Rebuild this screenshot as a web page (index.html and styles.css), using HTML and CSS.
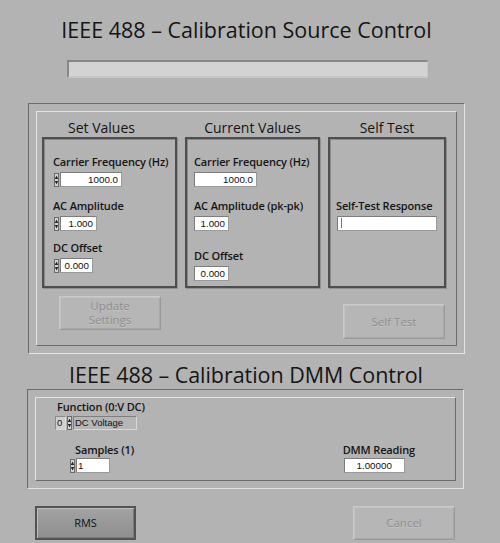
FILE: index.html
```html
<!DOCTYPE html>
<html>
<head>
<meta charset="utf-8">
<title>IEEE 488 Calibration</title>
<link rel="stylesheet" href="styles.css">
</head>
<body>
<div class="page">
  <h1 class="title">IEEE 488 – Calibration Source Control</h1>
  <div class="progress"></div>

  <div class="frame frame-source">
    <div class="frame-inner inner-source">
      <div class="cols">
        <div class="col-head head-set">Set Values</div>
        <div class="col-head">Current Values</div>
        <div class="col-head">Self Test</div>

        <div class="panel panel-set">
          <div class="field">
            <div class="label">Carrier Frequency (Hz)</div>
            <div class="ctl">
              <svg class="spin" width="5" height="14" viewBox="0 0 5 14"><rect x="0.5" y="0.5" width="4" height="13" fill="#d6d6d6" stroke="#6a6a6a"/><path d="M0.8 6 L2.5 2.6 L4.2 6Z M0.8 8 L2.5 11.4 L4.2 8Z" fill="#222"/></svg>
              <div class="num w62">1000.0</div>
            </div>
          </div>
          <div class="field f2">
            <div class="label">AC Amplitude</div>
            <div class="ctl">
              <svg class="spin" width="5" height="14" viewBox="0 0 5 14"><rect x="0.5" y="0.5" width="4" height="13" fill="#d6d6d6" stroke="#6a6a6a"/><path d="M0.8 6 L2.5 2.6 L4.2 6Z M0.8 8 L2.5 11.4 L4.2 8Z" fill="#222"/></svg>
              <div class="num w37">1.000</div>
            </div>
          </div>
          <div class="field f3">
            <div class="label">DC Offset</div>
            <div class="ctl">
              <svg class="spin" width="5" height="14" viewBox="0 0 5 14"><rect x="0.5" y="0.5" width="4" height="13" fill="#d6d6d6" stroke="#6a6a6a"/><path d="M0.8 6 L2.5 2.6 L4.2 6Z M0.8 8 L2.5 11.4 L4.2 8Z" fill="#222"/></svg>
              <div class="num w33">0.000</div>
            </div>
          </div>
        </div>

        <div class="panel panel-cur">
          <div class="field">
            <div class="label">Carrier Frequency (Hz)</div>
            <div class="ctl"><div class="num w63">1000.0</div></div>
          </div>
          <div class="field f2">
            <div class="label">AC Amplitude (pk-pk)</div>
            <div class="ctl"><div class="num w35">1.000</div></div>
          </div>
          <div class="field f3c">
            <div class="label">DC Offset</div>
            <div class="ctl"><div class="num w35">0.000</div></div>
          </div>
        </div>

        <div class="panel panel-self">
          <div class="field">
            <div class="label">Self-Test Response</div>
            <div class="ctl"><div class="num text-box w100"><span class="caret"></span></div></div>
          </div>
        </div>

        <div class="btn btn-off btn-update">Update<br>Settings</div>
        <div></div>
        <div class="btn btn-off btn-self">Self Test</div>
      </div>
    </div>
  </div>

  <h1 class="title title-dmm">IEEE 488 – Calibration DMM Control</h1>

  <div class="frame frame-dmm">
    <div class="frame-inner inner-dmm">
      <div class="label">Function (0:V DC)</div>
      <div class="ctl ring">
        <div class="ring-idx">0</div>
        <svg class="spin" width="5" height="14" viewBox="0 0 5 14"><rect x="0.5" y="0.5" width="4" height="13" fill="#d6d6d6" stroke="#6a6a6a"/><path d="M0.8 6 L2.5 2.6 L4.2 6Z M0.8 8 L2.5 11.4 L4.2 8Z" fill="#222"/></svg>
        <div class="ring-text">DC Voltage</div>
      </div>
      <div class="dmm-row">
        <div class="samples">
          <div class="label samples-label">Samples (1)</div>
          <div class="ctl">
            <svg class="spin" width="5" height="14" viewBox="0 0 5 14"><rect x="0.5" y="0.5" width="4" height="13" fill="#d6d6d6" stroke="#6a6a6a"/><path d="M0.8 6 L2.5 2.6 L4.2 6Z M0.8 8 L2.5 11.4 L4.2 8Z" fill="#222"/></svg>
            <div class="num left w34">1</div>
          </div>
        </div>
        <div class="reading">
          <div class="label">DMM Reading</div>
          <div class="ctl"><div class="num center w61">1.00000</div></div>
        </div>
      </div>
    </div>
  </div>

  <div class="bottom-row">
    <div class="btn btn-rms">RMS</div>
    <div class="btn btn-off btn-cancel">Cancel</div>
  </div>
</div>
</body>
</html>
```

FILE: styles.css
```css
html, body {
  margin: 0;
  padding: 0;
  background: #b3b3b3;
}

.page {
  width: 500px;
  height: 543px;
  overflow: hidden;
  background: #b3b3b3;
  font-family: "Open Sans", "DejaVu Sans", sans-serif;
  color: #151515;
}

.title {
  margin: 0;
  padding-top: 17px;
  font-weight: 400;
  font-size: 21.5px;
  line-height: 26px;
  text-align: center;
  padding-right: 7px;
  color: #151515;
}

.title-dmm {
  padding-top: 8px;
  padding-right: 8px;
  letter-spacing: -0.05px;
}

.progress {
  margin: 17px 0 0 67px;
  width: 361px;
  height: 18px;
  box-sizing: border-box;
  background: #d3d3d3;
  border-style: solid;
  border-width: 2px 1px 2px 2px;
  border-color: #878787 #c6c6c6 #c6c6c6 #878787;
}

.frame {
  box-sizing: border-box;
  width: 437px;
  padding: 7px;
  border: 1px solid;
  border-color: #6c6c6c #e4e4e4 #e4e4e4 #6c6c6c;
}

.frame-source {
  margin: 25px 0 0 28px;
  height: 251px;
}

.frame-dmm {
  margin: 1px 0 0 27px;
  height: 100px;
}

.frame-inner {
  box-sizing: border-box;
  height: 100%;
  border: 1px solid;
  border-color: #e4e4e4 #6c6c6c #6c6c6c #e4e4e4;
}

.inner-source {
  padding: 7px 0 0 5px;
}

.cols {
  display: grid;
  grid-template-columns: 135px 135px 118px;
  column-gap: 8px;
  align-items: start;
}

.col-head {
  font-size: 14px;
  line-height: 17px;
  text-align: center;
  margin-bottom: 1px;
}

.head-set {
  padding-right: 16px;
}

.panel {
  box-sizing: border-box;
  height: 151px;
  border: 2px solid #4e4e4e;
  box-shadow: inset 1px 1px 0 #8a8a8a, 1px 1px 0 #909090;
  padding-top: 16px;
}

.panel-set { padding-left: 9px; }
.panel-cur { padding-left: 7px; }
.panel-self { padding-left: 6px; padding-top: 60px; }

.field + .field { margin-top: 12px; }
.field.f3 { margin-top: 10px; }
.field.f3c { margin-top: 18px; }

.label {
  font-weight: 600;
  font-size: 11px;
  line-height: 14px;
  letter-spacing: -0.15px;
  white-space: nowrap;
  color: #151515;
}

.ctl {
  display: flex;
  align-items: center;
  margin-top: 3px;
}

.spin {
  display: block;
  margin-left: 1px;
  margin-right: 1px;
  flex: none;
}

.num {
  box-sizing: border-box;
  height: 15px;
  background: #ffffff;
  border: 1px solid;
  border-color: #7c7c7c #9a9a9a #9a9a9a #7c7c7c;
  font-family: "Liberation Sans", Arial, sans-serif;
  font-size: 9.8px;
  line-height: 13px;
  text-align: right;
  padding: 0 3px;
  color: #111;
  white-space: nowrap;
}

.num.left { text-align: left; padding-left: 1px; }
.num.center { text-align: center; }

.text-box { margin-left: 1px; }
.caret {
  display: block;
  width: 1px;
  height: 10px;
  margin-top: 1px;
  background: #777;
}

.w33 { width: 33px; }
.w34 { width: 34px; }
.w35 { width: 35px; }
.w37 { width: 37px; }
.w61 { width: 61px; }
.w62 { width: 62px; }
.w63 { width: 63px; }
.w100 { width: 100px; }

.btn {
  box-sizing: border-box;
  display: flex;
  align-items: center;
  justify-content: center;
  text-align: center;
  font-size: 11.5px;
  line-height: 14px;
}

.btn-off {
  background: #b6b6b6;
  border: 1px solid;
  border-color: #cacaca #999999 #999999 #cacaca;
  box-shadow: inset 1px 1px 0 #c2c2c2, inset -1px -1px 0 #a8a8a8;
  color: #8d8d8d;
  text-shadow: 0 1px 0 #c4c4c4;
}

.btn-update {
  width: 102px;
  height: 34px;
  margin: 8px 0 0 17px;
}

.btn-self {
  width: 102px;
  height: 35px;
  margin-top: 16px;
  justify-self: end;
  margin-right: 1px;
}

.inner-dmm {
  padding: 2px 0 0 21px;
}

.ring {
  margin-left: -2px;
  margin-top: 2px;
  height: 14px;
}

.ring-idx {
  box-sizing: border-box;
  width: 11px;
  height: 14px;
  background: #cfcfcf;
  border: 1px solid;
  border-color: #8a8a8a #dcdcdc #dcdcdc #8a8a8a;
  font-family: "Liberation Sans", Arial, sans-serif;
  font-size: 9.5px;
  line-height: 12px;
  padding-left: 1px;
}

.ring .spin { margin-left: 1px; margin-right: 1px; }

.ring-text {
  box-sizing: border-box;
  width: 64px;
  height: 14px;
  background: #b6b6b6;
  border: 1px solid;
  border-color: #7e7e7e #d8d8d8 #d8d8d8 #7e7e7e;
  font-family: "Liberation Sans", Arial, sans-serif;
  font-size: 9.5px;
  line-height: 12px;
  padding-left: 1px;
  color: #111;
}

.dmm-row {
  display: flex;
  align-items: flex-start;
  margin-top: 13px;
}

.samples {
  margin-left: 13px;
}

.samples-label {
  padding-left: 5px;
}

.samples .ctl,
.reading .ctl {
  margin-top: 1px;
}

.samples .spin { margin-left: 0; }

.reading {
  margin-left: auto;
  margin-right: 40px;
}

.reading .num { margin-left: 1px; }

.bottom-row {
  display: flex;
  justify-content: space-between;
  margin-top: 17px;
  padding: 0 45px 0 35px;
}

.btn-rms {
  width: 101px;
  height: 34px;
  background: linear-gradient(#a3a3a3, #8e8e8e);
  border: 2px solid #535353;
  box-shadow: inset 1px 1px 0 #bdbdbd, inset -1px -1px 0 #7a7a7a;
  color: #111;
  font-size: 11px;
}

.btn-cancel {
  width: 102px;
  height: 34px;
}
```
